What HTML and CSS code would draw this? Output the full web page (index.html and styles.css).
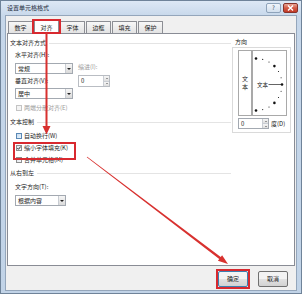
FILE: index.html
```html
<!DOCTYPE html>
<html lang="zh-CN">
<head>
<meta charset="utf-8">
<title>设置单元格格式</title>
<link rel="stylesheet" href="styles.css">
</head>
<body>
<div class="window">
  <div class="titlebar">
    <span class="title">设置单元格格式</span>
    <span class="tb-btn help">?</span>
    <span class="tb-btn close"><svg width="7" height="6" viewBox="0 0 7 6"><path d="M1 0.5 L6 5.5 M6 0.5 L1 5.5" stroke="#fff" stroke-width="1.4"/></svg></span>
  </div>
  <div class="client">
    <div class="tabs">
      <div class="tab">数字</div>
      <div class="tab active">对齐</div>
      <div class="tab">字体</div>
      <div class="tab">边框</div>
      <div class="tab">填充</div>
      <div class="tab">保护</div>
    </div>
    <div class="panel">
      <div class="left">
        <div class="group-head">文本对齐方式</div>
        <div class="align-grid">
          <div class="lcol">
            <div class="label">水平对齐(H):</div>
            <div class="select first"><span>常规</span><i class="arrow"></i></div>
            <div class="label mt3">垂直对齐(V):</div>
            <div class="select mt3"><span>居中</span><i class="arrow"></i></div>
          </div>
          <div class="rcol">
            <div class="label disabled">缩进(I):</div>
            <div class="spin indent"><span class="val">0</span><span class="btns"><i class="up"></i><i class="down"></i></span></div>
          </div>
        </div>
        <div class="check single disabled"><span class="box"></span>两端分散对齐(E)</div>
        <div class="group-head gh2">文本控制</div>
        <div class="check first-check"><span class="box hot"></span>自动换行(W)</div>
        <div class="check marked"><span class="box"><svg width="4" height="4" viewBox="0 0 4 4"><path d="M0.3 2 L1.5 3.3 L3.7 0.5" fill="none" stroke="#222" stroke-width="0.9"/></svg></span>缩小字体填充(K)</div>
        <div class="check"><span class="box"></span>合并单元格(M)</div>
        <div class="group-head gh3">从右到左</div>
        <div class="label sub">文字方向(T):</div>
        <div class="select dir"><span>根据内容</span><i class="arrow"></i></div>
      </div>
      <div class="right">
        <div class="orient-label">方向</div>
        <div class="orient-box">
          <div class="orient-row">
            <div class="vtext"><span>文</span><span>本</span></div>
            <div class="dial">
              <svg width="33" height="64" viewBox="0 0 33 64">
                <g fill="#111">
                  <circle cx="3" cy="7.5" r="1.3"/>
                  <circle cx="21.4" cy="15.1" r="1.3"/>
                  <circle cx="29" cy="33.5" r="1.3"/>
                  <circle cx="21.4" cy="51.9" r="1.3"/>
                  <circle cx="3" cy="59.5" r="1.3"/>
                  <circle cx="9.7" cy="8.4" r="0.55"/>
                  <circle cx="16" cy="11" r="0.55"/>
                  <circle cx="25.5" cy="20.5" r="0.55"/>
                  <circle cx="28.1" cy="26.8" r="0.55"/>
                  <circle cx="28.1" cy="40.2" r="0.55"/>
                  <circle cx="25.5" cy="46.5" r="0.55"/>
                  <circle cx="16" cy="56" r="0.55"/>
                  <circle cx="9.7" cy="58.6" r="0.55"/>
                </g>
                <text x="4" y="35.6" font-size="5.5" fill="#222" font-family="Noto Sans CJK SC, sans-serif">文本</text>
                <line x1="15.5" y1="33.5" x2="28.5" y2="33.5" stroke="#222" stroke-width="0.7"/>
              </svg>
            </div>
          </div>
          <div class="deg-row">
            <div class="spin deg"><span class="val">0</span><span class="btns"><i class="up"></i><i class="down"></i></span></div>
            <span class="deg-label">度(D)</span>
          </div>
        </div>
      </div>
    </div>
    <div class="buttons">
      <div class="btn ok">确定</div>
      <div class="btn">取消</div>
    </div>
  </div>
  <svg class="arrows" width="302" height="294" viewBox="0 0 302 294">
    <polygon fill="#d8312f" points="45.5,33 47.5,33 47.5,126 50.5,126 46.5,134.5 42.5,126 45.5,126"/>
    <polygon fill="#d8312f" points="87.24,156.68 220.73,256.99 222.12,255.16 228,264 217.88,260.74 219.27,258.91 86.76,157.32"/>
  </svg>
</div>
</body>
</html>
```
FILE: styles.css
```css
* { box-sizing: border-box; }
html, body { margin: 0; padding: 0; }
body {
  width: 302px;
  height: 294px;
  overflow: hidden;
  font-family: "Noto Sans CJK SC", "Noto Sans", sans-serif;
  font-size: 6px;
  line-height: 8px;
  color: #1e1e1e;
}
.window {
  position: relative;
  width: 302px;
  height: 294px;
  border: 1px solid #6f8399;
  background: linear-gradient(#dde8f5, #c6d7ea 16px, #c1d3e7);
  display: flex;
  flex-direction: column;
}
.titlebar {
  height: 14px;
  flex: none;
  display: flex;
  align-items: flex-start;
  padding: 1px 3px 0 6px;
}
.title { margin-top: 2px; color: #1c2a3a; }
.tb-btn {
  height: 10px;
  width: 15px;
  margin-top: 1px;
  border-radius: 2px;
  display: flex;
  align-items: center;
  justify-content: center;
}
.help {
  margin-left: auto;
  border: 1px solid #8ea3ba;
  background: linear-gradient(#f0f5fb, #d2dfed);
  color: #33475c;
  font-size: 6px;
}
.close {
  margin-left: 2px;
  border: 1px solid #86332b;
  background: linear-gradient(#eaa595, #d35a45 50%, #c23a28);
}
.client {
  flex: 1;
  margin: 0 4px 2px 4px;
  border: 1px solid #94a6bb;
  background: #f0f0f0;
  display: flex;
  flex-direction: column;
  padding-top: 3px;
}
.tabs {
  display: flex;
  align-items: flex-end;
  height: 14px;
  margin-left: 2px;
  position: relative;
  z-index: 1;
}
.tab {
  width: 25px;
  height: 12px;
  margin-right: 1px;
  border: 1px solid #8c8e94;
  border-bottom: none;
  border-radius: 1px 1px 0 0;
  background: linear-gradient(#f7f7f7, #e3e3e3);
  display: flex;
  align-items: center;
  justify-content: center;
}
.tab.active {
  position: relative;
  height: 14px;
  margin-bottom: -1px;
  background: #fff;
}
.tab.active::after {
  content: "";
  position: absolute;
  left: -3px;
  right: -3px;
  top: -2px;
  bottom: 0;
  border: 2px solid #d8292f;
}
.panel {
  height: 233px;
  flex: none;
  margin: 0 1px;
  border: 1px solid #898c95;
  background: #fff;
  display: flex;
  padding: 5px 2px 0 2px;
}
.left { width: 221px; }
.group-head {
  display: flex;
  align-items: center;
  height: 8px;
}
.group-head::after {
  content: "";
  flex: 1;
  height: 1px;
  margin-left: 3px;
  background: #e4e4e4;
}
.gh2 { margin-top: 6px; }
.gh3 { margin-top: 3px; }
.label { height: 8px; }
.disabled { color: #9a9a9a; }
.mt3 { margin-top: 3px; }
.align-grid {
  display: flex;
  margin: 4px 0 0 5px;
}
.lcol { width: 58px; }
.rcol { margin-left: 5px; padding-top: 12px; }
.select {
  height: 11px;
  border: 1px solid #a3a9b1;
  background: #fff;
  display: flex;
  align-items: center;
  padding-left: 2px;
}
.select.first { margin-top: 4px; }
.select .arrow {
  margin-left: auto;
  width: 7px;
  height: 9px;
  border-left: 1px solid #c9cdd3;
  background: linear-gradient(#f6f6f6, #dadada);
  display: flex;
  align-items: center;
  justify-content: center;
}
.select .arrow::before {
  content: "";
  border-left: 2px solid transparent;
  border-right: 2px solid transparent;
  border-top: 2px solid #222;
}
.select.dir { width: 51px; margin: 4px 0 0 5px; }
.sub { margin: 6px 0 0 5px; }
.spin {
  display: flex;
  height: 12px;
  width: 32px;
  border: 1px solid #a3a9b1;
  background: #fff;
}
.spin.indent { margin-top: 4px; border-color: #b9bdc3; }
.spin .val {
  flex: 1;
  padding-left: 2px;
  display: flex;
  align-items: center;
}
.spin .btns {
  width: 6px;
  display: flex;
  flex-direction: column;
  border-left: 1px solid #c9cdd3;
}
.spin .btns i {
  flex: 1;
  background: linear-gradient(#f6f6f6, #dedede);
  display: flex;
  align-items: center;
  justify-content: center;
}
.spin .btns i + i { border-top: 1px solid #c9cdd3; }
.spin .up::before {
  content: "";
  border-left: 1.5px solid transparent;
  border-right: 1.5px solid transparent;
  border-bottom: 1.5px solid #444;
}
.spin .down::before {
  content: "";
  border-left: 1.5px solid transparent;
  border-right: 1.5px solid transparent;
  border-top: 1.5px solid #444;
}
.check {
  display: flex;
  align-items: center;
  height: 12px;
  margin-left: 6px;
  gap: 2px;
}
.check.single { height: 8px; margin-top: 5px; }
.check.first-check { margin-top: 4px; }
.box {
  width: 6px;
  height: 6px;
  border: 1px solid #8e8f8f;
  background: linear-gradient(135deg, #dbe2ea, #f7f8fa);
  display: flex;
  align-items: center;
  justify-content: center;
}
.box.hot { border-color: #5a88b5; background: linear-gradient(135deg, #c6dcf0, #eaf3fb); }
.check.disabled .box { border-color: #c4c4c4; background: #f4f4f4; }
.check.marked { position: relative; width: 55px; }
.check.marked::after {
  content: "";
  position: absolute;
  left: -3px;
  top: 0;
  width: 59px;
  height: 14px;
  border: 2px solid #d8292f;
}
.right { width: 59px; margin-left: 1px; }
.orient-label { height: 8px; padding-left: 3px; margin-top: -1px; }
.orient-box {
  height: 86px;
  margin-top: 1px;
  border: 1px solid #dadada;
  padding: 2px 0 0 5px;
}
.orient-row { display: flex; height: 66px; }
.vtext {
  width: 14px;
  border: 1px solid #a9a9a9;
  display: flex;
  flex-direction: column;
  align-items: center;
  justify-content: center;
  line-height: 8px;
}
.dial {
  width: 35px;
  border: 1px solid #a9a9a9;
}
.dial svg { display: block; }
.deg-row { display: flex; align-items: center; margin-top: 2px; }
.spin.deg { width: 31px; height: 11px; }
.deg-label { margin-left: 2px; }
.buttons {
  display: flex;
  justify-content: flex-end;
  gap: 10px;
  padding-right: 8px;
  margin-top: 5px;
}
.btn {
  width: 30px;
  height: 16px;
  border: 1px solid #707070;
  border-radius: 2px;
  background: linear-gradient(#f3f3f3 50%, #e2e2e2 50%, #d2d2d2);
  display: flex;
  align-items: center;
  justify-content: center;
}
.btn.ok { position: relative; border-color: #3c7fb1; }
.btn.ok::after {
  content: "";
  position: absolute;
  left: -3px;
  right: -3px;
  top: -3px;
  bottom: -3px;
  border: 2px solid #d8292f;
}
.arrows {
  position: absolute;
  left: -1px;
  top: -1px;
  pointer-events: none;
  z-index: 5;
}
```
